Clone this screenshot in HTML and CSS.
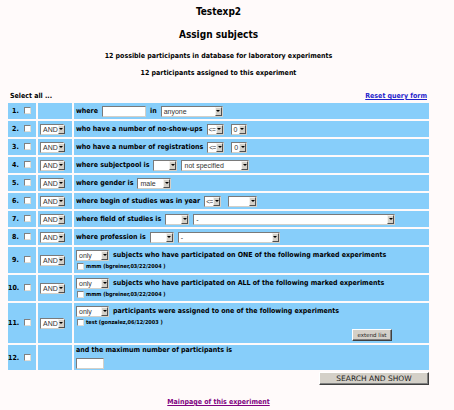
FILE: index.html
```html
<!DOCTYPE html>
<html>
<head>
<meta charset="utf-8">
<title>Assign subjects</title>
<link rel="stylesheet" href="styles.css">
</head>
<body>
<div class="page">
  <h1 class="title">Testexp2</h1>
  <h2 class="subtitle">Assign subjects</h2>
  <p class="info first">12 possible participants in database for laboratory experiments</p>
  <p class="info second">12 participants assigned to this experiment</p>
  <div class="toolbar"><span>Select all ...</span><a class="reset" href="#">Reset query form</a></div>
  <table class="query">
    <colgroup><col class="c-num"><col class="c-op"><col class="c-cond"></colgroup>
    <tr class="r-std">
      <td class="num">1. <input type="checkbox" class="cb"></td>
      <td class="op"></td>
      <td class="cond"><div class="line"><span>where</span><input type="text" class="txt w44"><span>in</span><span class="sel w62"><span class="sel-val">anyone</span><span class="sel-btn"></span></span></div></td>
    </tr>
    <tr class="r-std">
      <td class="num">2. <input type="checkbox" class="cb"></td>
      <td class="op"><span class="sel w24"><span class="sel-val">AND</span><span class="sel-btn"></span></span></td>
      <td class="cond"><div class="line"><span>who have a number of no-show-ups</span><span class="sel w17"><span class="sel-val tight">&lt;=</span><span class="sel-btn"></span></span><span class="sel w16 gap3"><span class="sel-val">0</span><span class="sel-btn"></span></span></div></td>
    </tr>
    <tr class="r-std">
      <td class="num">3. <input type="checkbox" class="cb"></td>
      <td class="op"><span class="sel w24"><span class="sel-val">AND</span><span class="sel-btn"></span></span></td>
      <td class="cond"><div class="line"><span>who have a number of registrations</span><span class="sel w17"><span class="sel-val tight">&lt;=</span><span class="sel-btn"></span></span><span class="sel w16 gap3"><span class="sel-val">0</span><span class="sel-btn"></span></span></div></td>
    </tr>
    <tr class="r-std">
      <td class="num">4. <input type="checkbox" class="cb"></td>
      <td class="op"><span class="sel w24"><span class="sel-val">AND</span><span class="sel-btn"></span></span></td>
      <td class="cond"><div class="line"><span>where subjectpool is</span><span class="sel w24"><span class="sel-val"></span><span class="sel-btn"></span></span><span class="sel w68"><span class="sel-val">not specified</span><span class="sel-btn"></span></span></div></td>
    </tr>
    <tr class="r-std">
      <td class="num">5. <input type="checkbox" class="cb"></td>
      <td class="op"><span class="sel w24"><span class="sel-val">AND</span><span class="sel-btn"></span></span></td>
      <td class="cond"><div class="line"><span>where gender is</span><span class="sel w34"><span class="sel-val">male</span><span class="sel-btn"></span></span></div></td>
    </tr>
    <tr class="r-std">
      <td class="num">6. <input type="checkbox" class="cb"></td>
      <td class="op"><span class="sel w24"><span class="sel-val">AND</span><span class="sel-btn"></span></span></td>
      <td class="cond"><div class="line"><span>where begin of studies was in year</span><span class="sel w17"><span class="sel-val tight">&lt;=</span><span class="sel-btn"></span></span><span class="sel w29 gap3"><span class="sel-val"></span><span class="sel-btn"></span></span></div></td>
    </tr>
    <tr class="r-std">
      <td class="num">7. <input type="checkbox" class="cb"></td>
      <td class="op"><span class="sel w24"><span class="sel-val">AND</span><span class="sel-btn"></span></span></td>
      <td class="cond"><div class="line"><span>where field of studies is</span><span class="sel w24"><span class="sel-val"></span><span class="sel-btn"></span></span><span class="sel w202"><span class="sel-val">-</span><span class="sel-btn"></span></span></div></td>
    </tr>
    <tr class="r-std">
      <td class="num">8. <input type="checkbox" class="cb"></td>
      <td class="op"><span class="sel w24"><span class="sel-val">AND</span><span class="sel-btn"></span></span></td>
      <td class="cond"><div class="line"><span>where profession is</span><span class="sel w24"><span class="sel-val"></span><span class="sel-btn"></span></span><span class="sel w102"><span class="sel-val">-</span><span class="sel-btn"></span></span></div></td>
    </tr>
    <tr class="r-exp">
      <td class="num">9. <input type="checkbox" class="cb"></td>
      <td class="op"><span class="sel w24"><span class="sel-val">AND</span><span class="sel-btn"></span></span></td>
      <td class="cond">
        <div class="line"><span class="sel w33"><span class="sel-val">only</span><span class="sel-btn"></span></span><span>subjects who have participated on ONE of the following marked experiments</span></div>
        <div class="line small"><input type="checkbox" class="cb"><span>mmm (bgreiner,03/22/2004 )</span></div>
      </td>
    </tr>
    <tr class="r-exp">
      <td class="num">10. <input type="checkbox" class="cb"></td>
      <td class="op"><span class="sel w24"><span class="sel-val">AND</span><span class="sel-btn"></span></span></td>
      <td class="cond">
        <div class="line"><span class="sel w33"><span class="sel-val">only</span><span class="sel-btn"></span></span><span>subjects who have participated on ALL of the following marked experiments</span></div>
        <div class="line small"><input type="checkbox" class="cb"><span>mmm (bgreiner,03/22/2004 )</span></div>
      </td>
    </tr>
    <tr class="r-ext">
      <td class="num">11. <input type="checkbox" class="cb"></td>
      <td class="op"><span class="sel w24"><span class="sel-val">AND</span><span class="sel-btn"></span></span></td>
      <td class="cond">
        <div class="line"><span class="sel w33"><span class="sel-val">only</span><span class="sel-btn"></span></span><span>participants were assigned to one of the following experiments</span></div>
        <div class="line small"><input type="checkbox" class="cb"><span>test (gonzalez,06/12/2003 )</span></div>
        <div class="extend"><button type="button" class="btn btn-extend">extend list</button></div>
      </td>
    </tr>
    <tr class="r-max">
      <td class="num">12. <input type="checkbox" class="cb"></td>
      <td class="op"></td>
      <td class="cond">
        <div class="max-label">and the maximum number of participants is</div>
        <input type="text" class="txt w28">
      </td>
    </tr>
  </table>
  <div class="submit-row"><button type="button" class="btn btn-search">SEARCH AND SHOW</button></div>
  <div class="footer"><a class="mainlink" href="#">Mainpage of this experiment</a></div>
</div>
</body>
</html>
```
FILE: styles.css
```css
* { box-sizing: border-box; }

body {
  margin: 0;
  background: #fffafa;
  font-family: "DejaVu Sans Condensed", "DejaVu Sans", Verdana, sans-serif;
  font-stretch: condensed;
  font-weight: bold;
  font-size: 7px;
  color: #000;
}

.page {
  width: 421px;
  margin-left: 8px;
}

.title {
  margin: 0;
  padding-top: 6px;
  font-size: 10px;
  line-height: 12px;
  text-align: center;
}

.subtitle {
  margin: 11px 0 0;
  font-size: 10px;
  line-height: 12px;
  text-align: center;
}

.info {
  margin: 0;
  line-height: 10px;
  text-align: center;
}
.info.first { margin-top: 10px; }
.info.second { margin-top: 7px; }

.toolbar {
  margin-top: 13px;
  height: 10px;
  line-height: 10px;
  padding: 0 2px;
  display: flex;
  justify-content: space-between;
}

.reset { color: #1f1fcc; text-decoration: underline; }

.query {
  width: 425px;
  margin-left: -2px;
  border-collapse: separate;
  border-spacing: 2px;
  table-layout: fixed;
}
.c-num { width: 28px; }
.c-op { width: 34px; }

.query td {
  background: #87cefa;
  padding: 0;
  vertical-align: middle;
}

.r-std td { height: 16px; }
.r-exp td { height: 26px; }
.r-ext td { height: 40px; }
.r-max td { height: 25px; }

.num {
  text-align: right;
  padding-right: 5px !important;
  white-space: nowrap;
}
.num .cb { margin-left: 3px; vertical-align: -1px; }

.op { padding-left: 2px !important; }

.cond { padding-left: 2px !important; }

.line {
  display: flex;
  align-items: center;
  gap: 4px;
  white-space: nowrap;
}
.line + .line { margin-top: 1px; }

.line.small {
  font-size: 5.5px;
  gap: 2px;
  padding-left: 1px;
  height: 9px;
}

.cb {
  appearance: none;
  -webkit-appearance: none;
  display: inline-block;
  width: 7px;
  height: 7px;
  margin: 0;
  background: #fff;
  border: 1px solid;
  border-color: #808080 #e0ddd6 #e0ddd6 #808080;
}

.txt {
  appearance: none;
  -webkit-appearance: none;
  display: inline-block;
  height: 11px;
  margin: 0;
  padding: 0;
  background: #fff;
  border: 1px solid;
  border-color: #7a7a7a #d4d0c8 #d4d0c8 #7a7a7a;
}

.sel {
  display: inline-flex;
  height: 11px;
  background: #fff;
  border: 1px solid;
  border-color: #7a7a7a #d4d0c8 #d4d0c8 #7a7a7a;
  font-family: "Liberation Sans", Arial, sans-serif;
  font-stretch: normal;
  font-weight: normal;
  font-size: 7px;
  color: #333;
  vertical-align: middle;
}
.sel-val {
  flex: 1;
  padding-left: 2px;
  line-height: 9px;
  white-space: nowrap;
}
.sel-val.tight {
  padding-left: 1px;
  letter-spacing: -0.5px;
  font-size: 6.5px;
}
.sel-btn {
  width: 7px;
  flex: none;
  background: #d4d0c8;
  border: 1px solid;
  border-color: #f4f2ee #505050 #505050 #f4f2ee;
  display: flex;
  align-items: center;
  justify-content: center;
}
.sel-btn::after {
  content: "";
  border-left: 2px solid transparent;
  border-right: 2px solid transparent;
  border-top: 2px solid #000;
}

.gap3 { margin-left: 3px; }

.w16 { width: 16px; }
.w17 { width: 17px; }
.w24 { width: 24px; }
.w28 { width: 28px; }
.w29 { width: 29px; }
.w33 { width: 33px; }
.w34 { width: 34px; }
.w44 { width: 44px; }
.w62 { width: 62px; }
.w68 { width: 68px; }
.w102 { width: 102px; }
.w202 { width: 202px; }

.extend {
  display: flex;
  justify-content: flex-end;
  padding-right: 37px;
  margin-top: 2px;
}

.btn {
  appearance: none;
  -webkit-appearance: none;
  margin: 0;
  padding: 0;
  background: #d4d0c8;
  border: 1px solid;
  border-color: #ffffff #404040 #404040 #ffffff;
  box-shadow: inset -1px -1px 0 #808080;
  font-family: "DejaVu Sans", Verdana, sans-serif;
  font-weight: normal;
  color: #222;
}

.btn-extend {
  width: 40px;
  height: 12px;
  font-size: 5.5px;
}

.max-label { line-height: 9px; }
.r-max .txt { margin-top: 3px; }

.submit-row {
  display: flex;
  justify-content: flex-end;
}

.btn-search {
  width: 110px;
  height: 13px;
  font-size: 7.5px;
}

.footer {
  margin-top: 12px;
  text-align: center;
  line-height: 10px;
}

.mainlink { color: #800080; text-decoration: underline; }
```
